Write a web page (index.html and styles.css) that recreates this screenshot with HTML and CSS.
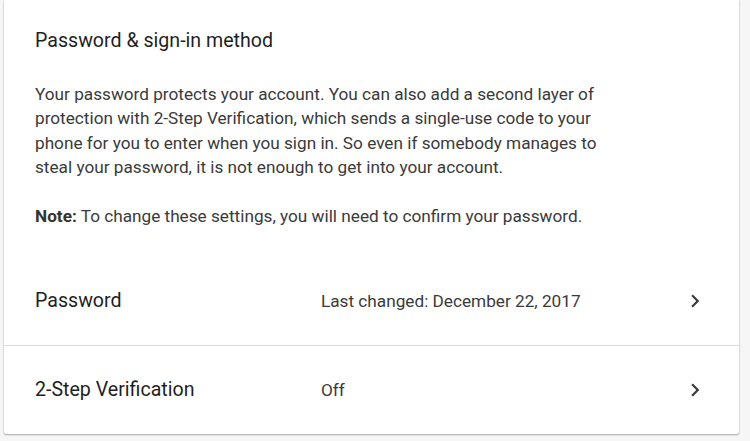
FILE: index.html
```html
<!DOCTYPE html>
<html lang="en">
<head>
<meta charset="utf-8">
<title>Password &amp; sign-in method</title>
<link rel="stylesheet" href="styles.css">
</head>
<body>
<section class="card">
  <div class="intro">
    <h2 class="title">Password &amp; sign-in method</h2>
    <p class="desc">Your password protects your account. You can also add a second layer of protection with 2-Step Verification, which sends a single-use code to your phone for you to enter when you sign in. So even if somebody manages to steal your password, it is not enough to get into your account.</p>
    <p class="desc note"><b>Note:</b> To change these settings, you will need to confirm your password.</p>
  </div>
  <a class="row">
    <span class="label">Password</span>
    <span class="value">Last changed: December 22, 2017</span>
    <svg class="chev" viewBox="0 0 24 24" width="26" height="26"><path d="M10 6L8.59 7.41 13.17 12l-4.58 4.59L10 18l6-6z"/></svg>
  </a>
  <a class="row row-last">
    <span class="label">2-Step Verification</span>
    <span class="value">Off</span>
    <svg class="chev" viewBox="0 0 24 24" width="26" height="26"><path d="M10 6L8.59 7.41 13.17 12l-4.58 4.59L10 18l6-6z"/></svg>
  </a>
</section>
</body>
</html>
```

FILE: styles.css
```css
html, body {
  margin: 0;
  padding: 0;
}
body {
  background: #f6f6f6;
  font-family: Roboto, "Liberation Sans", Arial, sans-serif;
  width: 750px;
  height: 441px;
  overflow: hidden;
}
.card {
  margin: 0 11px 0 4px;
  background: #fff;
  border-radius: 0 0 2px 2px;
  box-shadow: 0 1px 2px rgba(0, 0, 0, 0.3), 0 0 1px rgba(0, 0, 0, 0.3);
}
.intro {
  padding: 29px 32px 28px 31px;
}
.title {
  margin: 0;
  font-size: 19.6px;
  line-height: 24px;
  font-weight: 400;
  color: #1f1f1f;
}
.desc {
  width: 572px;
  margin: 29px 0 0;
  font-size: 17.2px;
  line-height: 24.3px;
  color: #3a3a3a;
}
.note {
  margin-top: 25px;
}
.note b {
  font-weight: 700;
  color: #333;
}
.row {
  display: grid;
  grid-template-columns: 286px 1fr 26px;
  align-items: center;
  height: 89px;
  padding: 0 31px 0 31px;
  border-bottom: 1px solid #dadada;
  color: inherit;
  text-decoration: none;
}
.row-last {
  height: 88px;
  border-bottom: none;
}
.label {
  font-size: 19.6px;
  line-height: 24px;
  color: #1f1f1f;
}
.value {
  font-size: 17.2px;
  line-height: 24px;
  color: #3a3a3a;
}
.chev {
  display: block;
  fill: #3a3a3a;
}
```
